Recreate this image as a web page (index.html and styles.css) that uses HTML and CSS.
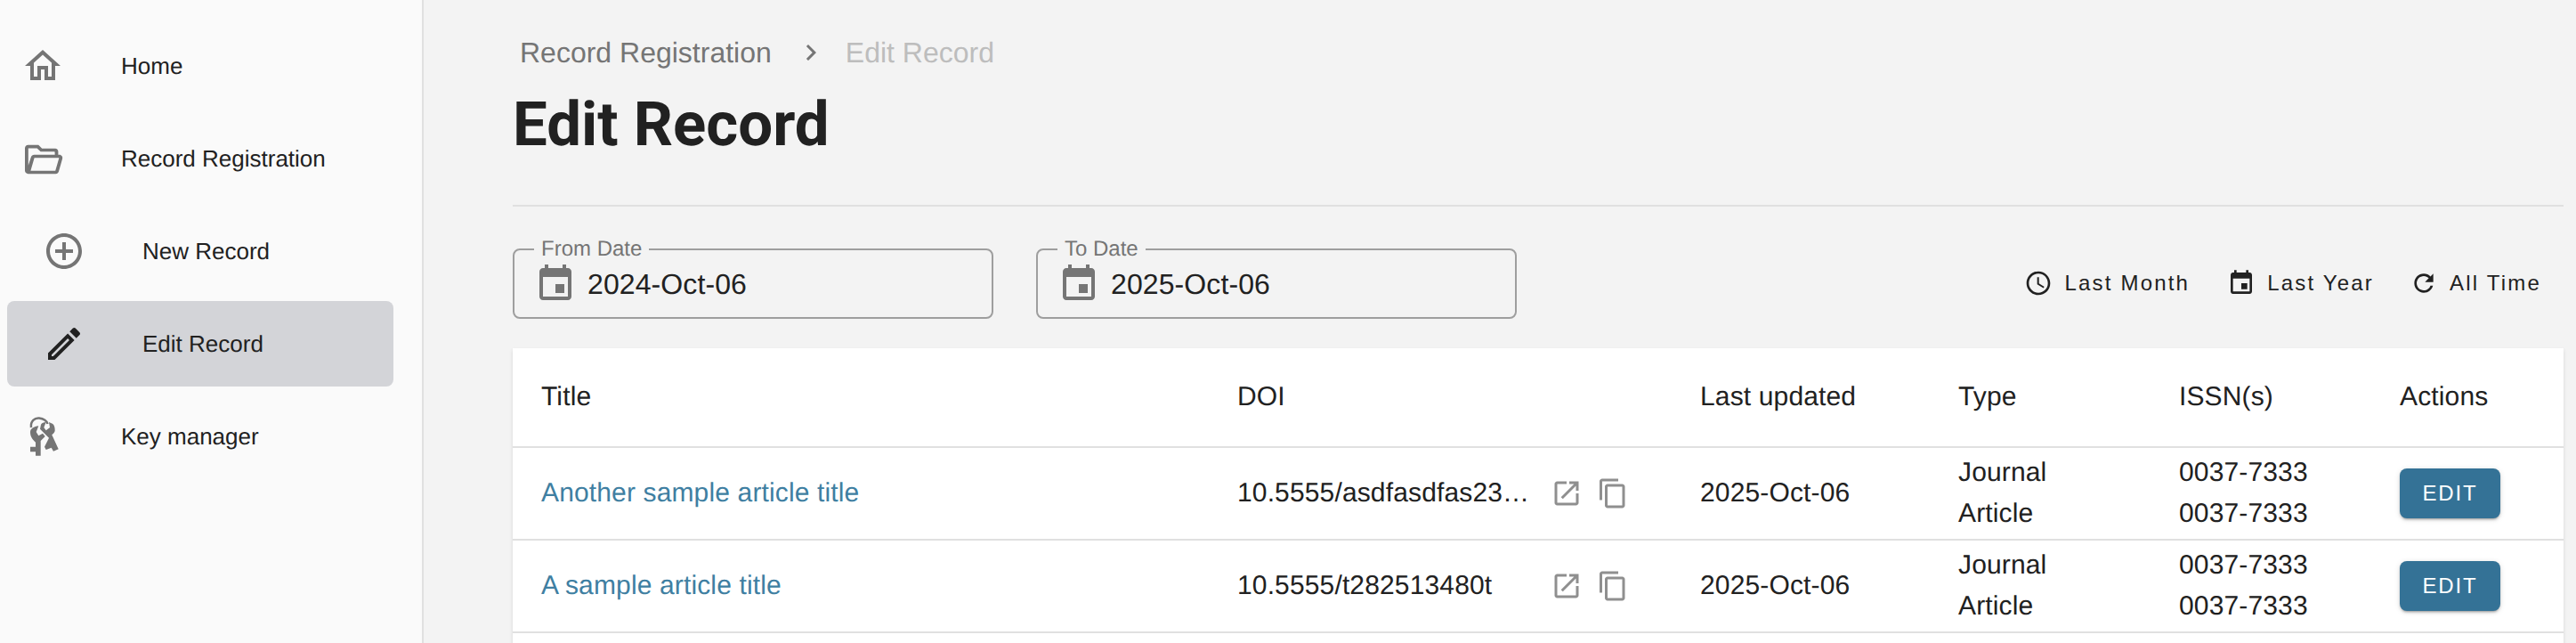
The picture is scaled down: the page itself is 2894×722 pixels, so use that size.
FILE: index.html
```html
<!DOCTYPE html>
<html lang="en">
<head>
<meta charset="utf-8">
<title>Edit Record</title>
<link rel="stylesheet" href="styles.css">
</head>
<body>
<div class="app">
  <nav class="sidebar">
    <a class="nav-item">
      <svg class="nav-icon" viewBox="0 0 24 24"><path d="m12 5.69 5 4.5V18h-2v-6H9v6H7v-7.81zM12 3 2 12h3v8h6v-6h2v6h6v-8h3z"/></svg>
      <span>Home</span>
    </a>
    <a class="nav-item">
      <svg class="nav-icon" viewBox="0 0 24 24"><path d="M3.8 4.4H9.6l2 2H19c1 0 1.7.7 1.7 1.7V9.9h.6c1.3 0 2.1 1.2 1.7 2.4l-2 7c-.2.8-.9 1.3-1.7 1.3H3.8c-1 0-1.8-.8-1.8-1.8V6.2c0-1 .8-1.8 1.8-1.8zM3.9 6.2v9.7l1.5-4.7c.3-.8 1-1.3 1.8-1.3h11.6V8.4c0-.2-.1-.3-.3-.3h-7.7l-2-1.9zM7.3 11.6 5.2 18.9h13.9l2.1-7.3z"/></svg>
      <span>Record Registration</span>
    </a>
    <a class="nav-item nested">
      <svg class="nav-icon" viewBox="0 0 24 24"><path d="M13 7h-2v4H7v2h4v4h2v-4h4v-2h-4V7zm-1-5C6.48 2 2 6.48 2 12s4.48 10 10 10 10-4.48 10-10S17.52 2 12 2zm0 18c-4.41 0-8-3.59-8-8s3.59-8 8-8 8 3.59 8 8-3.59 8-8 8z"/></svg>
      <span>New Record</span>
    </a>
    <a class="nav-item nested active">
      <svg class="nav-icon" viewBox="0 0 24 24"><path d="M14.06 9.02l.92.92L5.92 19H5v-.92l9.06-9.06M17.66 3c-.25 0-.51.1-.7.29l-1.83 1.83 3.75 3.75 1.83-1.83c.39-.39.39-1.02 0-1.41l-2.34-2.34c-.2-.2-.45-.29-.71-.29zm-3.6 3.19L3 17.25V21h3.75L17.81 9.94l-3.75-3.75z"/></svg>
      <span>Edit Record</span>
    </a>
    <a class="nav-item">
      <svg class="nav-icon" viewBox="0 0 48 48">
        <path class="key-ring" d="M11 14C10 7 15 3 20 3.500C25 4 29 7 29.500 10"/>
        <path d="M19.300 12.300C14 13 10 15.500 10 19C10 23 11 26 16 30.700V35.700H10V41.300H16V45.700H21.700V29L26.700 24L24 20.700L19.300 23.300L16.700 19Z"/>
        <path d="M22 10.700L21 15.700L26 20.700L31 25.700L26 35.700L27.700 39L33.700 36.700L36 40.700L41.700 38.300L34.300 22.300C36.500 20.500 37.700 19 37.700 17.300C37.700 14 37 11.500 35.300 10L31 8L32 14L27.700 17.300L25.300 14L27.700 8C25 8 23 9 22 10.700Z"/>
      </svg>
      <span>Key manager</span>
    </a>
  </nav>

  <main class="main">
    <div class="breadcrumbs">
      <span>Record Registration</span>
      <svg class="crumb-sep" viewBox="0 0 24 24"><path d="M10 6 8.590 7.410 13.170 12l-4.580 4.590L10 18l6-6z"/></svg>
      <span class="crumb-current">Edit Record</span>
    </div>
    <h1 class="page-title">Edit Record</h1>
    <hr class="divider">

    <div class="filters">
      <fieldset class="date-field">
        <legend>From Date</legend>
        <div class="date-value">
          <svg class="date-icon" viewBox="0 0 24 24"><path d="M17 12h-5v5h5v-5zM16 1v2H8V1H6v2H5c-1.110 0-1.990.9-1.990 2L3 19c0 1.100.89 2 2 2h14c1.100 0 2-.9 2-2V5c0-1.100-.9-2-2-2h-1V1h-2zm3 18H5V8h14v11z"/></svg>
          <span>2024-Oct-06</span>
        </div>
      </fieldset>
      <fieldset class="date-field">
        <legend>To Date</legend>
        <div class="date-value">
          <svg class="date-icon" viewBox="0 0 24 24"><path d="M17 12h-5v5h5v-5zM16 1v2H8V1H6v2H5c-1.110 0-1.990.9-1.990 2L3 19c0 1.100.89 2 2 2h14c1.100 0 2-.9 2-2V5c0-1.100-.9-2-2-2h-1V1h-2zm3 18H5V8h14v11z"/></svg>
          <span>2025-Oct-06</span>
        </div>
      </fieldset>
      <div class="ranges">
        <button class="range-btn">
          <svg viewBox="0 0 24 24"><path d="M11.990 2C6.470 2 2 6.480 2 12s4.470 10 9.990 10C17.520 22 22 17.520 22 12S17.520 2 11.990 2zM12 20c-4.420 0-8-3.580-8-8s3.580-8 8-8 8 3.580 8 8-3.580 8-8 8z"/><path d="M12.500 7H11v6l5.250 3.150.75-1.230-4.500-2.670z"/></svg>
          Last Month
        </button>
        <button class="range-btn">
          <svg viewBox="0 0 24 24"><path d="M17 12h-5v5h5v-5zM16 1v2H8V1H6v2H5c-1.110 0-1.990.9-1.990 2L3 19c0 1.100.89 2 2 2h14c1.100 0 2-.9 2-2V5c0-1.100-.9-2-2-2h-1V1h-2zm3 18H5V8h14v11z"/></svg>
          Last Year
        </button>
        <button class="range-btn">
          <svg viewBox="0 0 24 24"><path d="M17.650 6.350C16.200 4.900 14.210 4 12 4c-4.420 0-7.990 3.580-7.990 8s3.570 8 7.990 8c3.730 0 6.840-2.550 7.730-6h-2.080c-.82 2.330-3.040 4-5.650 4-3.310 0-6-2.690-6-6s2.690-6 6-6c1.660 0 3.140.69 4.220 1.780L13 11h7V4l-2.350 2.350z"/></svg>
          All Time
        </button>
      </div>
    </div>

    <section class="card">
      <table class="records">
        <colgroup>
          <col class="col-title"><col class="col-doi"><col class="col-date"><col class="col-type"><col class="col-issn"><col class="col-actions">
        </colgroup>
        <thead>
          <tr><th>Title</th><th>DOI</th><th>Last updated</th><th>Type</th><th>ISSN(s)</th><th>Actions</th></tr>
        </thead>
        <tbody>
          <tr>
            <td><a class="title-link">Another sample article title</a></td>
            <td>
              <div class="doi">
                <span class="doi-text">10.5555/asdfasdfas23wfasdf</span>
                <svg class="doi-icon" viewBox="0 0 24 24"><path d="M19 19H5V5h7V3H5c-1.110 0-2 .9-2 2v14c0 1.100.89 2 2 2h14c1.100 0 2-.9 2-2v-7h-2v7zM14 3v2h3.590l-9.830 9.830 1.410 1.410L19 6.410V10h2V3h-7z"/></svg>
                <svg class="doi-icon" viewBox="0 0 24 24"><path d="M16 1H4c-1.100 0-2 .9-2 2v14h2V3h12V1zm3 4H8c-1.100 0-2 .9-2 2v14c0 1.100.9 2 2 2h11c1.100 0 2-.9 2-2V7c0-1.100-.9-2-2-2zm0 16H8V7h11v14z"/></svg>
              </div>
            </td>
            <td>2025-Oct-06</td>
            <td>Journal Article</td>
            <td>0037-7333<br>0037-7333</td>
            <td><button class="edit-btn">Edit</button></td>
          </tr>
          <tr>
            <td><a class="title-link">A sample article title</a></td>
            <td>
              <div class="doi">
                <span class="doi-text">10.5555/t282513480t</span>
                <svg class="doi-icon" viewBox="0 0 24 24"><path d="M19 19H5V5h7V3H5c-1.110 0-2 .9-2 2v14c0 1.100.89 2 2 2h14c1.100 0 2-.9 2-2v-7h-2v7zM14 3v2h3.590l-9.830 9.830 1.410 1.410L19 6.410V10h2V3h-7z"/></svg>
                <svg class="doi-icon" viewBox="0 0 24 24"><path d="M16 1H4c-1.100 0-2 .9-2 2v14h2V3h12V1zm3 4H8c-1.100 0-2 .9-2 2v14c0 1.100.9 2 2 2h11c1.100 0 2-.9 2-2V7c0-1.100-.9-2-2-2zm0 16H8V7h11v14z"/></svg>
              </div>
            </td>
            <td>2025-Oct-06</td>
            <td>Journal Article</td>
            <td>0037-7333<br>0037-7333</td>
            <td><button class="edit-btn">Edit</button></td>
          </tr>
        </tbody>
      </table>
    </section>
  </main>
</div>
</body>
</html>
```
FILE: styles.css
```css
* { box-sizing: border-box; }

html, body {
  margin: 0;
  height: 100%;
  overflow: hidden;
}

body {
  font-family: "Liberation Sans", Arial, sans-serif;
  color: #212121;
  background: #f3f3f3;
  text-rendering: geometricPrecision;
}

.app {
  display: flex;
  height: 722px;
  overflow: hidden;
}

/* Sidebar */
.sidebar {
  flex: 0 0 476px;
  display: flex;
  flex-direction: column;
  gap: 8px;
  padding: 26px 32px 0 8px;
  background: #fafafa;
  border-right: 2px solid #e0e0e0;
}

.nav-item {
  display: flex;
  align-items: center;
  gap: 64px;
  height: 96px;
  padding-left: 16px;
  border-radius: 8px;
  font-size: 26px;
  color: #212121;
}

.nav-item.nested { padding-left: 40px; }
.nav-item.active { background: #d3d4d8; }

.nav-icon {
  flex: none;
  width: 48px;
  height: 48px;
  fill: #757575;
}

.nav-item.active .nav-icon { fill: #212121; }

.key-ring {
  fill: none;
  stroke: #757575;
  stroke-width: 2.5;
}

/* Main column */
.main {
  flex: 1;
  min-width: 0;
  padding: 35px 14px 0 100px;
}

.breadcrumbs {
  display: flex;
  align-items: center;
  height: 48px;
  padding-left: 8px;
  font-size: 32px;
  color: #757575;
}

.crumb-sep {
  width: 36px;
  height: 36px;
  margin: 0 21px 0 26px;
  fill: #757575;
}

.crumb-current { color: #bdbdbd; }

.page-title {
  margin: 17px 0 0;
  font-family: Roboto, "Liberation Sans", sans-serif;
  font-size: 69px;
  font-weight: 700;
  line-height: 80px;
  color: #212121;
}

.divider {
  height: 2px;
  margin: 50px 0 0;
  border: 0;
  background: #e0e0e0;
}

/* Filters */
.filters {
  display: flex;
  align-items: center;
  gap: 48px;
  margin-top: 36px;
}

.date-field {
  flex: none;
  width: 540px;
  height: 90px;
  margin: 0;
  padding: 0 0 0 24px;
  border: 2px solid #9e9e9e;
  border-radius: 8px;
  min-width: 0;
}

.date-field legend {
  padding: 0 8px;
  margin-left: -2px;
  font-size: 24px;
  line-height: 24px;
  color: #757575;
}

.date-value {
  display: flex;
  align-items: center;
  gap: 12px;
  height: 54px;
  margin-left: -2px;
  font-size: 32px;
  letter-spacing: 0.1px;
}

.date-icon {
  flex: none;
  width: 48px;
  height: 48px;
  fill: #757575;
}

.ranges {
  display: flex;
  margin-left: auto;
  padding: 10px 5px 0 0;
}

.range-btn {
  display: flex;
  align-items: center;
  gap: 13px;
  padding: 8px 20px;
  border: 0;
  background: none;
  font: inherit;
  font-size: 24px;
  letter-spacing: 2.2px;
  color: #212121;
}

.range-btn:first-child { margin-right: 2px; }

.range-btn svg {
  width: 32px;
  height: 32px;
  fill: #212121;
}

/* Table card */
.card {
  height: 400px;
  margin-top: 33px;
  background: #fff;
  box-shadow: 0 2px 4px rgba(0, 0, 0, 0.12);
}

.records {
  width: 100%;
  table-layout: fixed;
  border-collapse: separate;
  border-spacing: 0;
  font-size: 30px;
  line-height: 46px;
  letter-spacing: 0.14px;
  color: #212121;
}

.col-title { width: 782px; }
.col-doi { width: 520px; }
.col-date { width: 290px; }
.col-type { width: 248px; }
.col-issn { width: 248px; }
.col-actions { width: 216px; }

.records th,
.records td {
  padding: 0 32px;
  text-align: left;
  font-weight: 400;
  border-bottom: 2px solid #e0e0e0;
}

.records thead tr { height: 112px; }
.records tbody tr { height: 104px; }

.title-link { color: #3f7fa2; }

.doi {
  display: flex;
  align-items: center;
  margin-right: 16px;
}

.doi-text {
  flex: 1;
  min-width: 0;
  white-space: nowrap;
  overflow: hidden;
  text-overflow: ellipsis;
}

.doi-icon {
  flex: none;
  width: 36px;
  height: 36px;
  margin-left: 16px;
  fill: #8f8f8f;
}

.edit-btn {
  display: block;
  width: 113px;
  height: 56px;
  padding: 0;
  border: 0;
  border-radius: 8px;
  background: #347296;
  box-shadow: 0 3px 2px -2px rgba(0, 0, 0, 0.2), 0 2px 3px rgba(0, 0, 0, 0.14), 0 1px 6px rgba(0, 0, 0, 0.12);
  font: inherit;
  font-size: 24px;
  letter-spacing: 1.85px;
  text-transform: uppercase;
  color: #fff;
}
```
